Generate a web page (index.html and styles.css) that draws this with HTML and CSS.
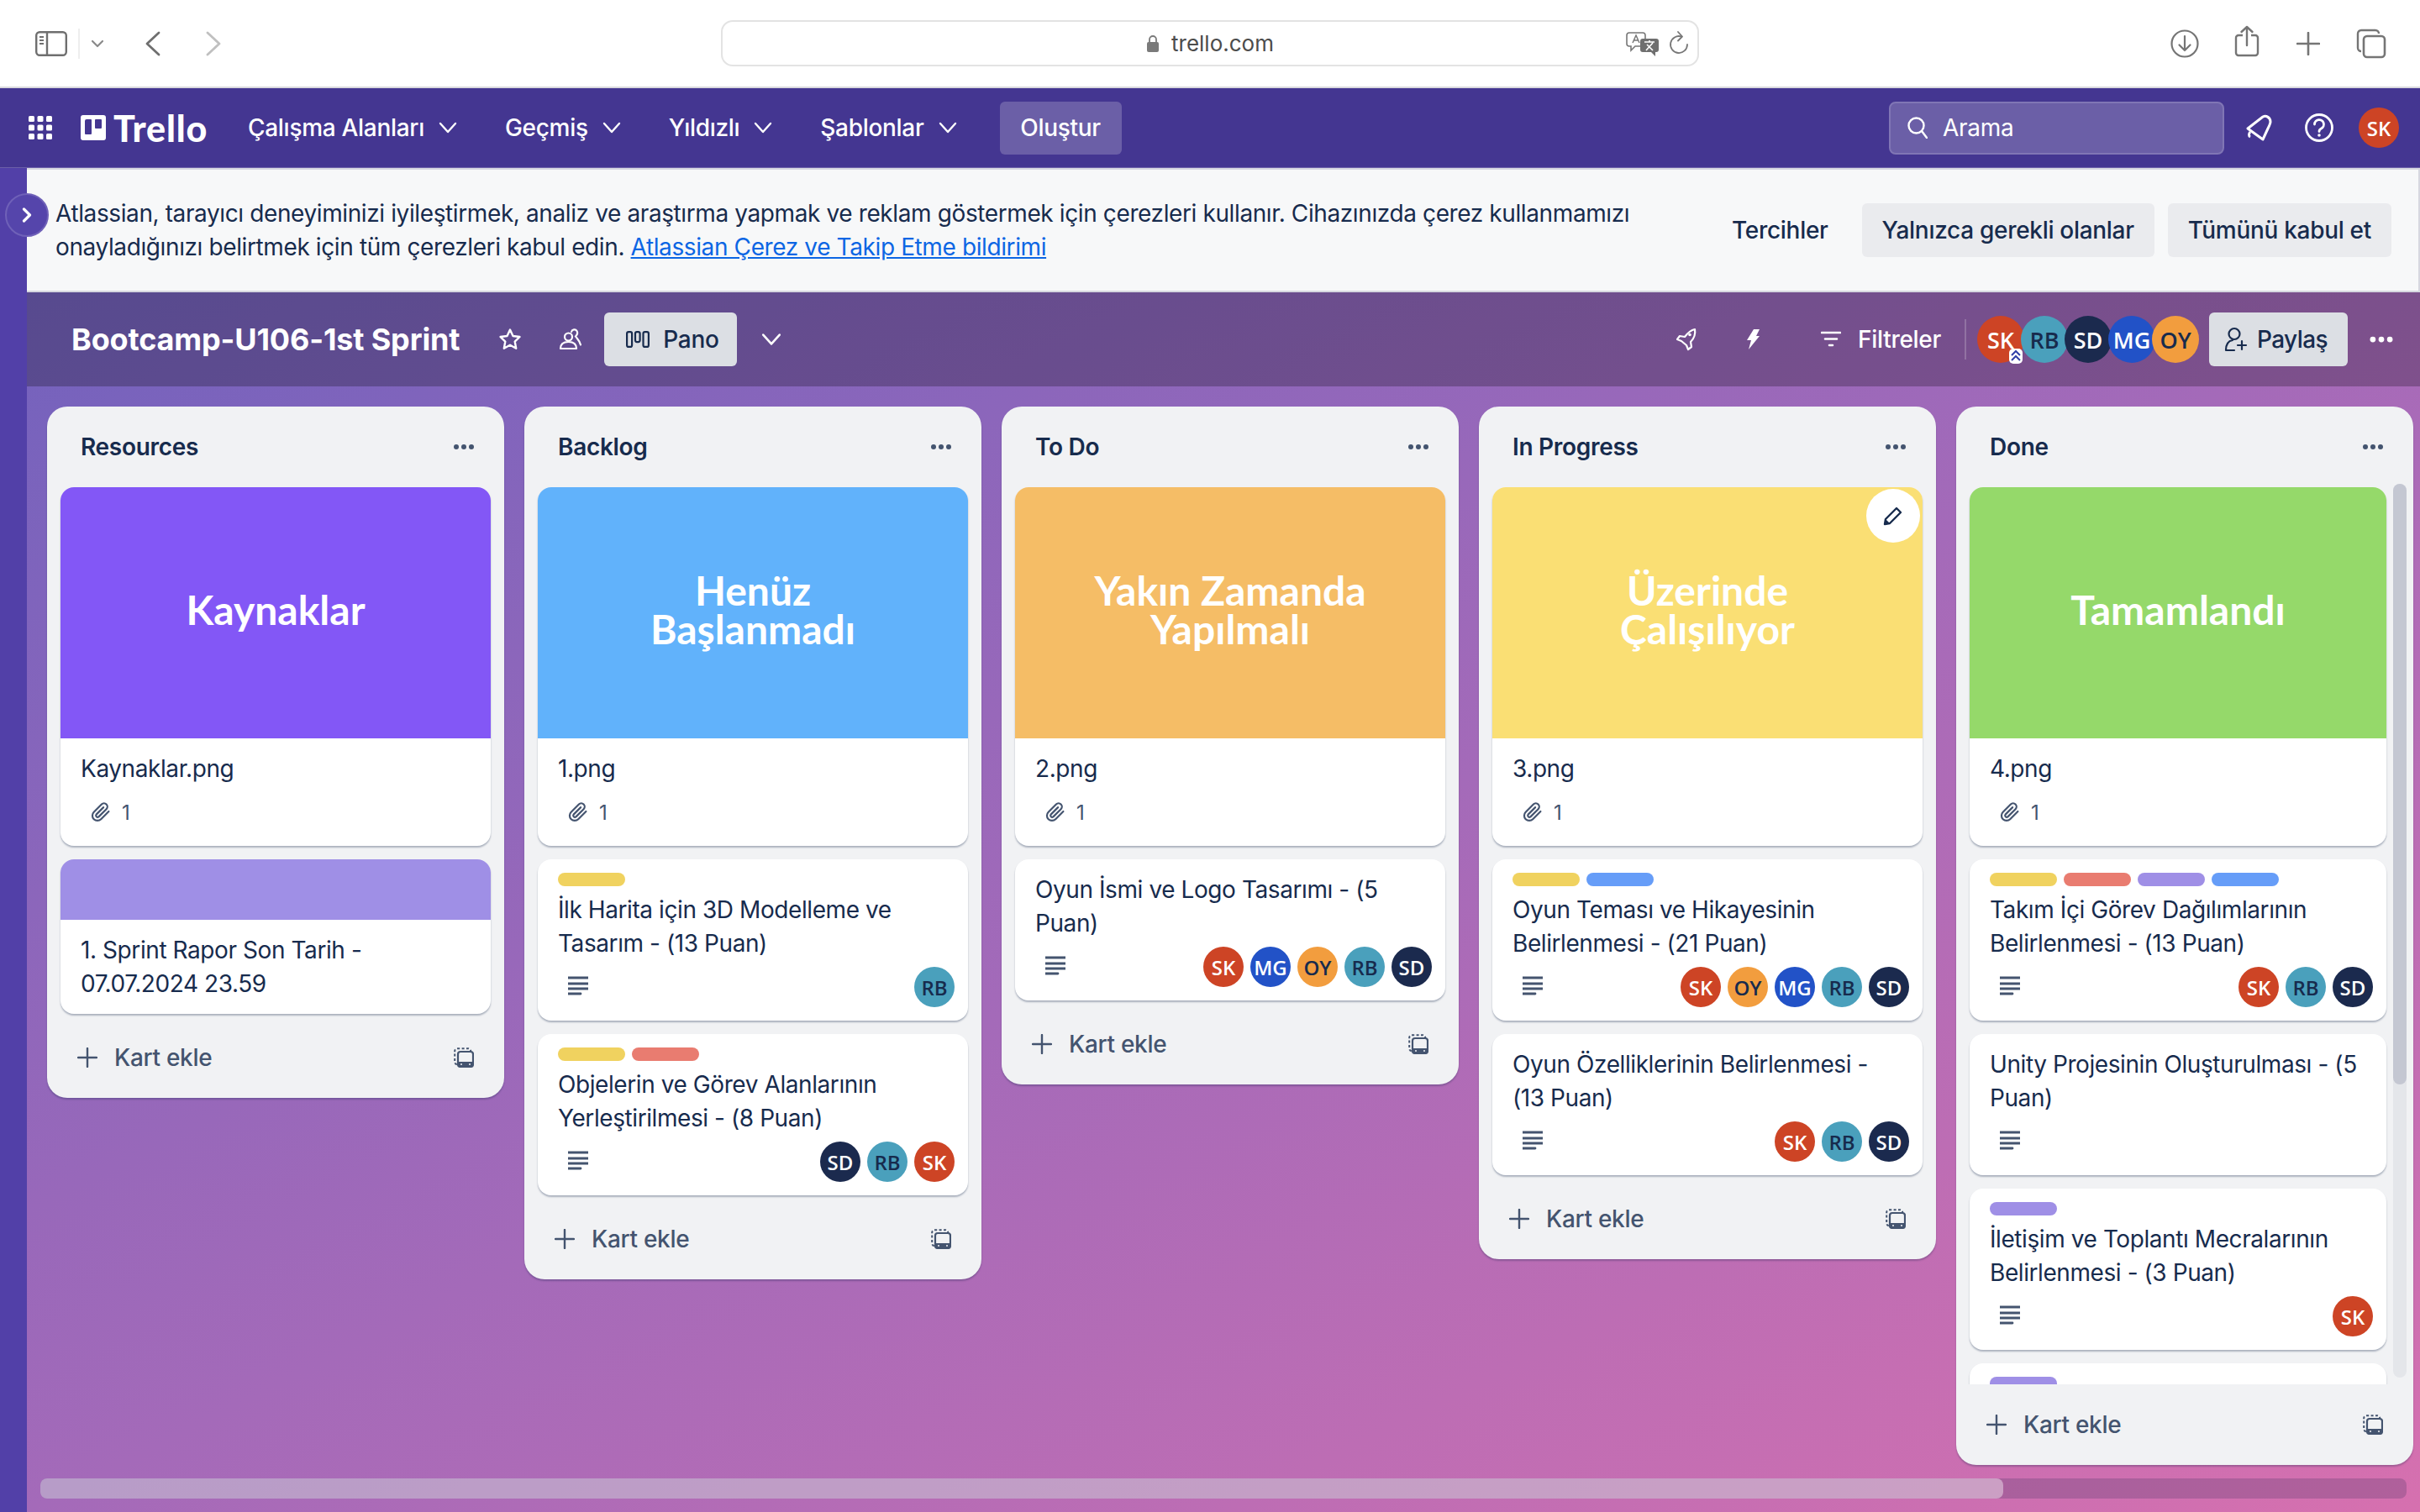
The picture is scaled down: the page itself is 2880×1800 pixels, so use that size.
FILE: index.html
```html
<!DOCTYPE html>
<html lang="tr">
<head>
<meta charset="utf-8">
<title>Bootcamp-U106-1st Sprint | Trello</title>
<link rel="stylesheet" href="styles.css">
</head>
<body>
<svg class="defs" width="0" height="0">
	<symbol id="i-chev" viewBox="0 0 24 24"><path d="M3 7l9 10 9-10" fill="none" stroke="currentColor" stroke-width="2.4" stroke-linecap="round" stroke-linejoin="round"/></symbol>
	<symbol id="i-dots" viewBox="0 0 32 32"><circle cx="7" cy="16" r="3" fill="currentColor"/><circle cx="16" cy="16" r="3" fill="currentColor"/><circle cx="25" cy="16" r="3" fill="currentColor"/></symbol>
	<symbol id="i-clip" viewBox="0 0 24 24"><path d="M21.4 11l-9.2 9.2a6 6 0 0 1-8.5-8.5l9.2-9.2a4 4 0 0 1 5.7 5.7l-9.2 9.2a2 2 0 0 1-2.8-2.8l8.5-8.5" fill="none" stroke="currentColor" stroke-width="2.2" stroke-linecap="round" stroke-linejoin="round"/></symbol>
	<symbol id="i-desc" viewBox="0 0 24 24"><path d="M0 3h24M0 10h24M0 16h24M0 22h15" stroke="currentColor" stroke-width="2.8" stroke-linecap="round" fill="none"/></symbol>
	<symbol id="i-plus" viewBox="0 0 24 24"><path d="M12 1v22M1 12h22" stroke="currentColor" stroke-width="2.4" stroke-linecap="round"/></symbol>
	<symbol id="i-tmpl" viewBox="0 0 24 24"><rect x="1.2" y="1.2" width="19" height="19" rx="3" fill="none" stroke="currentColor" stroke-width="2" stroke-dasharray="3 2.4"/><rect x="5" y="5" width="18" height="18" rx="3" fill="#f1f2f4" stroke="currentColor" stroke-width="2.2"/><path d="M5 17h18v3a3 3 0 0 1-3 3H8a3 3 0 0 1-3-3z" fill="currentColor"/><circle cx="9" cy="20" r="1" fill="#f1f2f4"/><circle cx="19" cy="20" r="1" fill="#f1f2f4"/></symbol>
</svg>

<header class="toolbar">
	<div class="tb-left">
		<svg class="tb-side" viewBox="0 0 38 30"><rect x="1.2" y="1.2" width="35.6" height="27.6" rx="4" fill="none" stroke="#6f6f6f" stroke-width="2.4"/><path d="M14 1v28" stroke="#6f6f6f" stroke-width="2.4"/><path d="M5 7h5M5 11h5M5 15h5" stroke="#6f6f6f" stroke-width="1.8"/></svg>
		<span class="tb-div"></span>
		<svg class="tb-mini" viewBox="0 0 14 10"><path d="M1 2l6 6 6-6" fill="none" stroke="#8a8a8a" stroke-width="2.2" stroke-linecap="round" stroke-linejoin="round"/></svg>
		<svg class="tb-back" viewBox="0 0 18 30"><path d="M16 2L2 15l14 13" fill="none" stroke="#6f6f6f" stroke-width="2.8" stroke-linecap="round" stroke-linejoin="round"/></svg>
		<svg class="tb-fwd" viewBox="0 0 18 30"><path d="M2 2l14 13L2 28" fill="none" stroke="#c0c0c0" stroke-width="2.8" stroke-linecap="round" stroke-linejoin="round"/></svg>
	</div>
	<div class="address">
		<span class="addr-url">
			<svg class="addr-lock" viewBox="0 0 16 22"><path d="M4 9V6a4 4 0 0 1 8 0v3" fill="none" stroke="#7a7a7a" stroke-width="1.8"/><rect x="1" y="9" width="14" height="12" rx="2" fill="#7a7a7a"/></svg>
			trello.com
		</span>
		<svg class="addr-trans" viewBox="0 0 40 30"><path d="M4 2h16a3 3 0 0 1 3 3v10a3 3 0 0 1-3 3H11l-5 5v-5H4a3 3 0 0 1-3-3V5a3 3 0 0 1 3-3z" fill="#fff" stroke="#777" stroke-width="1.6"/><path d="M8 14l4-9 4 9M9.5 11h5" fill="none" stroke="#777" stroke-width="1.5"/><path d="M20 9h16a3 3 0 0 1 3 3v10a3 3 0 0 1-3 3h-1v5l-5-5H20a3 3 0 0 1-3-3V12a3 3 0 0 1 3-3z" fill="#6f6f6f"/><path d="M22 13h12M28 11v2M24 23l8-9M25 16l7 7" fill="none" stroke="#fff" stroke-width="1.6"/></svg>
		<svg class="addr-reload" viewBox="0 0 24 28"><path d="M15 6.5A10 10 0 1 0 22 16" fill="none" stroke="#777" stroke-width="1.8" stroke-linecap="round"/><path d="M11 1l5 5.500-5 5" fill="none" stroke="#777" stroke-width="1.8" stroke-linecap="round" stroke-linejoin="round"/></svg>
	</div>
	<div class="tb-right">
		<svg class="tb-dl" viewBox="0 0 34 34"><circle cx="17" cy="17" r="15.500" fill="none" stroke="#757575" stroke-width="2.2"/><path d="M17 8v17M10.500 18.500L17 25l6.500-6.500" fill="none" stroke="#757575" stroke-width="2.2" stroke-linecap="round" stroke-linejoin="round"/></svg>
		<svg class="tb-share" viewBox="0 0 30 38"><path d="M10 12H5a3 3 0 0 0-3 3v18a3 3 0 0 0 3 3h20a3 3 0 0 0 3-3V15a3 3 0 0 0-3-3h-5" fill="none" stroke="#757575" stroke-width="2.4"/><path d="M15 24V2M8.500 8L15 2l6.500 6" fill="none" stroke="#757575" stroke-width="2.4" stroke-linecap="round" stroke-linejoin="round"/></svg>
		<svg class="tb-plus" viewBox="0 0 28 28"><path d="M14 1v26M1 14h26" stroke="#757575" stroke-width="2.6" stroke-linecap="round"/></svg>
		<svg class="tb-tabs" viewBox="0 0 36 36"><path d="M6 27a4 4 0 0 1-4-4V6a4 4 0 0 1 4-4h17a4 4 0 0 1 4 4" fill="none" stroke="#757575" stroke-width="2.4"/><rect x="9" y="9" width="25" height="25" rx="4" fill="none" stroke="#757575" stroke-width="2.6"/></svg>
	</div>
</header>

<nav class="nav">
	<svg class="nav-apps" viewBox="0 0 28 28"><g fill="#fff"><rect x="0" y="0" width="7" height="7" rx="1.500"/><rect x="10.500" y="0" width="7" height="7" rx="1.500"/><rect x="21" y="0" width="7" height="7" rx="1.500"/><rect x="0" y="10.500" width="7" height="7" rx="1.500"/><rect x="10.500" y="10.500" width="7" height="7" rx="1.500"/><rect x="21" y="10.500" width="7" height="7" rx="1.500"/><rect x="0" y="21" width="7" height="7" rx="1.500"/><rect x="10.500" y="21" width="7" height="7" rx="1.500"/><rect x="21" y="21" width="7" height="7" rx="1.500"/></g></svg>
	<div class="logo">
		<svg class="logo-mark" viewBox="0 0 30 30"><path fill-rule="evenodd" fill="#fff" d="M3 0h24a3 3 0 0 1 3 3v24a3 3 0 0 1-3 3H3a3 3 0 0 1-3-3V3a3 3 0 0 1 3-3zm4 5a2 2 0 0 0-2 2v15a1 1 0 0 0 1 1h6a1 1 0 0 0 1-1V6a1 1 0 0 0-1-1zm11 0a1 1 0 0 0-1 1v9a1 1 0 0 0 1 1h6a1 1 0 0 0 1-1V6a1 1 0 0 0-1-1z"/></svg>
		<span>Trello</span>
	</div>
	<a class="nav-item">Çalışma Alanları <svg class="chev"><use href="#i-chev"/></svg></a>
	<a class="nav-item">Geçmiş <svg class="chev"><use href="#i-chev"/></svg></a>
	<a class="nav-item">Yıldızlı <svg class="chev"><use href="#i-chev"/></svg></a>
	<a class="nav-item">Şablonlar <svg class="chev"><use href="#i-chev"/></svg></a>
	<a class="nav-create">Oluştur</a>
	<div class="search">
		<svg class="search-ic" viewBox="0 0 24 26"><circle cx="10.500" cy="10.500" r="9" fill="none" stroke="#fff" stroke-width="2.4"/><path d="M17 17l6 8" stroke="#fff" stroke-width="2.4" stroke-linecap="round"/></svg>
		Arama
	</div>
	<svg class="nav-bell" viewBox="0 0 34 32"><path d="M3 17L21 3c4-2 9 1 9 6 0 2-1 4-3 8l-6 13L3 17z" fill="none" stroke="#fff" stroke-width="3" stroke-linejoin="round"/><path d="M6 21c-2 2-2 5 0 6" fill="none" stroke="#fff" stroke-width="3"/></svg>
	<svg class="nav-help" viewBox="0 0 34 34"><circle cx="17" cy="17" r="15.500" fill="none" stroke="#fff" stroke-width="2.800"/><path d="M11.500 13a5.500 5.500 0 1 1 8 5c-1.500.8-2.500 1.700-2.500 3.500" fill="none" stroke="#fff" stroke-width="2.800" stroke-linecap="round"/><circle cx="17" cy="26" r="1.800" fill="#fff"/></svg>
	<span class="av av-sk nav-av">SK</span>
</nav>

<div class="page">
	<aside class="side">
		<span class="side-btn"><svg viewBox="0 0 12 20"><path d="M2.500 3l7 7-7 7" fill="none" stroke="#fff" stroke-width="3.200" stroke-linecap="round" stroke-linejoin="round"/></svg></span>
	</aside>
	<main class="main">
		<section class="cookie">
			<p class="cookie-text">Atlassian, tarayıcı deneyiminizi iyileştirmek, analiz ve araştırma yapmak ve reklam göstermek için çerezleri kullanır. Cihazınızda çerez kullanmamızı<br>onayladığınızı belirtmek için tüm çerezleri kabul edin. <a href="#">Atlassian Çerez ve Takip Etme bildirimi</a></p>
			<div class="cookie-btns">
				<a class="cbtn cbtn-plain">Tercihler</a>
				<a class="cbtn">Yalnızca gerekli olanlar</a>
				<a class="cbtn">Tümünü kabul et</a>
			</div>
		</section>

		<div class="board">
			<header class="bh">
				<h1 class="bh-title">Bootcamp-U106-1st Sprint</h1>
				<svg class="bh-star" viewBox="0 0 28 28"><path d="M14 2.500l3.500 7.500 8 1-5.800 5.600 1.500 8.100L14 20.800l-7.200 3.900 1.500-8.100L2.500 11l8-1z" fill="none" stroke="#fff" stroke-width="2.400" stroke-linejoin="round"/></svg>
				<svg class="bh-team" viewBox="0 0 28 28"><circle cx="11.500" cy="11" r="4.500" fill="none" stroke="#fff" stroke-width="2.200"/><path d="M2 25c0-5 3-8 9.500-8s9.500 3 9.500 8z" fill="none" stroke="#fff" stroke-width="2.200" stroke-linejoin="round"/><path d="M15 5c1-3 5-3.500 6.500-1s0 5-1.500 6.500c2 3 5 5 6 10" fill="none" stroke="#fff" stroke-width="2.200" stroke-linecap="round"/></svg>
				<a class="bh-btn bh-pano"><svg viewBox="0 0 28 20"><g fill="none" stroke="#172b4d" stroke-width="2.200"><rect x="1.100" y="1.100" width="6" height="17.800" rx="2"/><rect x="11" y="1.100" width="5.600" height="12" rx="2"/><rect x="20.500" y="1.100" width="6.400" height="17.800" rx="2"/></g></svg>Pano</a>
				<svg class="bh-chev"><use href="#i-chev"/></svg>
				<svg class="bh-rocket" viewBox="0 0 26 28"><path d="M23 2c1 6-1 11-5 15l1 6-4 3-2-5-6-5-5-2 3-4 6 1c3-4 7-8 12-9z" fill="none" stroke="#fff" stroke-width="2.200" stroke-linejoin="round"/><circle cx="17" cy="8.500" r="1.800" fill="#fff"/></svg>
				<svg class="bh-bolt" viewBox="0 0 16 24"><path d="M9 0h7l-4 8h4L3 24l3-11H1z" fill="#fff"/></svg>
				<a class="bh-filter"><svg viewBox="0 0 24 20"><path d="M1 2h22M5 9.500h14M10 17h4" stroke="#fff" stroke-width="2.600" stroke-linecap="round"/></svg>Filtreler</a>
				<span class="bh-sep"></span>
				<div class="bh-avs">
					<span class="av av-sk">SK<svg class="av-admin" viewBox="0 0 16 18"><rect width="16" height="18" rx="5" fill="#fff"/><path d="M3 8l5-5 5 5M3 14l5-5 5 5" fill="none" stroke="#2f3fa8" stroke-width="2"/></svg></span>
					<span class="av av-rb">RB</span>
					<span class="av av-sd">SD</span>
					<span class="av av-mg">MG</span>
					<span class="av av-oy">OY</span>
				</div>
				<a class="bh-btn bh-share"><svg viewBox="0 0 28 30"><circle cx="12" cy="8.500" r="6.500" fill="none" stroke="#172b4d" stroke-width="2.200"/><path d="M2 28c0-7 2-11 8-12M12 28H2M21 17v10M16 22h10" fill="none" stroke="#172b4d" stroke-width="2.200" stroke-linecap="round"/></svg>Paylaş</a>
				<svg class="bh-dots"><use href="#i-dots"/></svg>
			</header>

			<div class="lists">
				<section class="list">
					<div class="list-head"><h2>Resources</h2><svg class="dots"><use href="#i-dots"/></svg></div>
					<div class="cards">
						<article class="card">
							<div class="cover cover-purple"><span>Kaynaklar</span></div>
							<div class="card-body">
								<p class="title">Kaynaklar.png</p>
								<div class="meta"><svg class="clip"><use href="#i-clip"/></svg><span class="count">1</span></div>
							</div>
						</article>
						<article class="card">
							<div class="strip"></div>
							<div class="card-body"><p class="title">1. Sprint Rapor Son Tarih -<br>07.07.2024 23.59</p></div>
						</article>
					</div>
					<div class="list-foot"><svg class="plus"><use href="#i-plus"/></svg><span>Kart ekle</span><svg class="tmpl"><use href="#i-tmpl"/></svg></div>
				</section>

				<section class="list">
					<div class="list-head"><h2>Backlog</h2><svg class="dots"><use href="#i-dots"/></svg></div>
					<div class="cards">
						<article class="card">
							<div class="cover cover-blue"><span>Henüz<br>Başlanmadı</span></div>
							<div class="card-body">
								<p class="title">1.png</p>
								<div class="meta"><svg class="clip"><use href="#i-clip"/></svg><span class="count">1</span></div>
							</div>
						</article>
						<article class="card">
							<div class="card-body">
								<div class="labels"><i class="lb lb-y"></i></div>
								<p class="title">İlk Harita için 3D Modelleme ve<br>Tasarım - (13 Puan)</p>
								<div class="meta"><svg class="desc"><use href="#i-desc"/></svg><div class="avs"><span class="av av-rb">RB</span></div></div>
							</div>
						</article>
						<article class="card">
							<div class="card-body">
								<div class="labels"><i class="lb lb-y"></i><i class="lb lb-r"></i></div>
								<p class="title">Objelerin ve Görev Alanlarının<br>Yerleştirilmesi - (8 Puan)</p>
								<div class="meta"><svg class="desc"><use href="#i-desc"/></svg><div class="avs"><span class="av av-sd">SD</span><span class="av av-rb">RB</span><span class="av av-sk">SK</span></div></div>
							</div>
						</article>
					</div>
					<div class="list-foot"><svg class="plus"><use href="#i-plus"/></svg><span>Kart ekle</span><svg class="tmpl"><use href="#i-tmpl"/></svg></div>
				</section>

				<section class="list">
					<div class="list-head"><h2>To Do</h2><svg class="dots"><use href="#i-dots"/></svg></div>
					<div class="cards">
						<article class="card">
							<div class="cover cover-orange"><span>Yakın Zamanda<br>Yapılmalı</span></div>
							<div class="card-body">
								<p class="title">2.png</p>
								<div class="meta"><svg class="clip"><use href="#i-clip"/></svg><span class="count">1</span></div>
							</div>
						</article>
						<article class="card">
							<div class="card-body">
								<p class="title">Oyun İsmi ve Logo Tasarımı - (5<br>Puan)</p>
								<div class="meta"><svg class="desc"><use href="#i-desc"/></svg><div class="avs"><span class="av av-sk">SK</span><span class="av av-mg">MG</span><span class="av av-oy">OY</span><span class="av av-rb">RB</span><span class="av av-sd">SD</span></div></div>
							</div>
						</article>
					</div>
					<div class="list-foot"><svg class="plus"><use href="#i-plus"/></svg><span>Kart ekle</span><svg class="tmpl"><use href="#i-tmpl"/></svg></div>
				</section>

				<section class="list">
					<div class="list-head"><h2>In Progress</h2><svg class="dots"><use href="#i-dots"/></svg></div>
					<div class="cards">
						<article class="card">
							<div class="cover cover-yellow"><span>Üzerinde<br>Çalışılıyor</span>
								<span class="edit"><svg viewBox="0 0 24 24"><path d="M16 3l5 5L8 21l-6 1 1-6z" fill="none" stroke="#172b4d" stroke-width="2.400" stroke-linejoin="round"/><path d="M3 16l5 5-6 1z" fill="#172b4d"/></svg></span>
							</div>
							<div class="card-body">
								<p class="title">3.png</p>
								<div class="meta"><svg class="clip"><use href="#i-clip"/></svg><span class="count">1</span></div>
							</div>
						</article>
						<article class="card">
							<div class="card-body">
								<div class="labels"><i class="lb lb-y"></i><i class="lb lb-b"></i></div>
								<p class="title">Oyun Teması ve Hikayesinin<br>Belirlenmesi - (21 Puan)</p>
								<div class="meta"><svg class="desc"><use href="#i-desc"/></svg><div class="avs"><span class="av av-sk">SK</span><span class="av av-oy">OY</span><span class="av av-mg">MG</span><span class="av av-rb">RB</span><span class="av av-sd">SD</span></div></div>
							</div>
						</article>
						<article class="card">
							<div class="card-body">
								<p class="title">Oyun Özelliklerinin Belirlenmesi -<br>(13 Puan)</p>
								<div class="meta"><svg class="desc"><use href="#i-desc"/></svg><div class="avs"><span class="av av-sk">SK</span><span class="av av-rb">RB</span><span class="av av-sd">SD</span></div></div>
							</div>
						</article>
					</div>
					<div class="list-foot"><svg class="plus"><use href="#i-plus"/></svg><span>Kart ekle</span><svg class="tmpl"><use href="#i-tmpl"/></svg></div>
				</section>

				<section class="list list-done">
					<div class="list-head"><h2>Done</h2><svg class="dots"><use href="#i-dots"/></svg></div>
					<div class="scroller">
						<div class="cards">
							<article class="card">
								<div class="cover cover-green"><span>Tamamlandı</span></div>
								<div class="card-body">
									<p class="title">4.png</p>
									<div class="meta"><svg class="clip"><use href="#i-clip"/></svg><span class="count">1</span></div>
								</div>
							</article>
							<article class="card">
								<div class="card-body">
									<div class="labels"><i class="lb lb-y"></i><i class="lb lb-r"></i><i class="lb lb-p"></i><i class="lb lb-b"></i></div>
									<p class="title">Takım İçi Görev Dağılımlarının<br>Belirlenmesi - (13 Puan)</p>
									<div class="meta"><svg class="desc"><use href="#i-desc"/></svg><div class="avs"><span class="av av-sk">SK</span><span class="av av-rb">RB</span><span class="av av-sd">SD</span></div></div>
								</div>
							</article>
							<article class="card">
								<div class="card-body">
									<p class="title">Unity Projesinin Oluşturulması - (5<br>Puan)</p>
									<div class="meta"><svg class="desc"><use href="#i-desc"/></svg></div>
								</div>
							</article>
							<article class="card">
								<div class="card-body">
									<div class="labels"><i class="lb lb-p"></i></div>
									<p class="title">İletişim ve Toplantı Mecralarının<br>Belirlenmesi - (3 Puan)</p>
									<div class="meta"><svg class="desc"><use href="#i-desc"/></svg><div class="avs"><span class="av av-sk">SK</span></div></div>
								</div>
							</article>
							<article class="card">
								<div class="card-body">
									<div class="labels"><i class="lb lb-p"></i></div>
								</div>
							</article>
						</div>
						<div class="vbar"><div class="vbar-thumb"></div></div>
					</div>
					<div class="list-foot"><svg class="plus"><use href="#i-plus"/></svg><span>Kart ekle</span><svg class="tmpl"><use href="#i-tmpl"/></svg></div>
				</section>
			</div>

			<div class="hbar"><div class="hbar-thumb"></div></div>
		</div>
	</main>
</div>
</body>
</html>
```

FILE: styles.css
```css
* {
	box-sizing: border-box;
}

html, body {
	margin: 0;
	height: 100%;
}

body {
	display: flex;
	flex-direction: column;
	height: 1800px;
	overflow: hidden;
	font-family: Inter, "Liberation Sans", sans-serif;
	font-size: 28px;
	color: #172b4d;
	letter-spacing: -0.3px;
}

a {
	color: inherit;
	text-decoration: none;
}

p, h1, h2 {
	margin: 0;
}

svg {
	flex: none;
	display: block;
}

.defs {
	position: absolute;
}

/* safari bar */
.toolbar {
	flex: none;
	height: 105px;
	display: grid;
	grid-template-columns: 858px 1164px 1fr;
	align-items: center;
	background: #fff;
	border-bottom: 2px solid #d9d9de;
}

.tb-left, .tb-right {
	display: flex;
	align-items: center;
}

.tb-left {
	padding-left: 42px;
}

.tb-side {
	width: 38px;
	height: 30px;
}

.tb-div {
	width: 2px;
	height: 36px;
	margin-left: 13px;
	background: #eee;
}

.tb-mini {
	width: 14px;
	height: 10px;
	margin-left: 14px;
}

.tb-back {
	width: 18px;
	height: 30px;
	margin-left: 50px;
}

.tb-fwd {
	width: 18px;
	height: 30px;
	margin-left: 54px;
}

.address {
	position: relative;
	height: 55px;
	display: flex;
	align-items: center;
	justify-content: center;
	border: 2px solid #e3e3e3;
	border-radius: 14px;
}

.addr-url {
	display: flex;
	align-items: center;
	gap: 14px;
	font-size: 26px;
	color: #4c4c4c;
	letter-spacing: 0;
}

.addr-lock {
	width: 16px;
	height: 22px;
}

.addr-trans {
	position: absolute;
	right: 45px;
	top: 11px;
	width: 40px;
	height: 30px;
}

.addr-reload {
	position: absolute;
	right: 10px;
	top: 11px;
	width: 24px;
	height: 28px;
}

.tb-right {
	padding-left: 561px;
}

.tb-dl {
	width: 34px;
	height: 34px;
}

.tb-share {
	width: 30px;
	height: 38px;
	margin: -6px 0 0 42px;
}

.tb-plus {
	width: 28px;
	height: 28px;
	margin-left: 44px;
}

.tb-tabs {
	width: 36px;
	height: 36px;
	margin-left: 43px;
}

/* top nav */
.nav {
	flex: none;
	height: 95px;
	display: flex;
	align-items: center;
	padding-left: 34px;
	background: #443691;
	border-bottom: 1px solid #6b5fa8;
	color: #fff;
	font-weight: 500;
}

.nav-apps {
	width: 28px;
	height: 28px;
}

.logo {
	display: flex;
	align-items: center;
	gap: 9px;
	margin-left: 34px;
	margin-right: 48px;
	font-family: Lato, sans-serif;
	font-size: 43px;
	font-weight: 900;
	letter-spacing: 0.8px;
}

.logo-mark {
	width: 30px;
	height: 30px;
}

.nav-item {
	display: flex;
	align-items: center;
	gap: 16px;
	margin-right: 56px;
}

.chev {
	width: 24px;
	height: 24px;
}

.nav-create {
	margin-left: -6px;
	width: 145px;
	height: 63px;
	display: flex;
	align-items: center;
	justify-content: center;
	background: #6b5fa7;
	border-radius: 6px;
}

.search {
	width: 399px;
	height: 63px;
	margin-left: auto;
	display: flex;
	align-items: center;
	gap: 18px;
	padding-left: 20px;
	background: #6b5fa7;
	border: 2px solid #8076b5;
	border-radius: 8px;
	font-weight: 400;
}

.search-ic {
	width: 24px;
	height: 26px;
}

.nav-bell {
	width: 34px;
	height: 32px;
	margin-left: 25px;
}

.nav-help {
	width: 34px;
	height: 34px;
	margin-left: 37px;
}

.nav-av {
	margin: 0 25px 0 30px;
}

/* page under the nav */
.page {
	flex: 1;
	display: flex;
	min-height: 0;
	position: relative;
}

.side {
	flex: none;
	width: 32px;
	background: #5240a8;
}

.side-btn {
	position: absolute;
	left: 6px;
	top: 30px;
	width: 52px;
	height: 52px;
	display: flex;
	align-items: center;
	justify-content: center;
	background: #5545ab;
	border: 2px solid #6f61b8;
	border-radius: 50%;
	z-index: 2;
}

.side-btn svg {
	width: 12px;
	height: 20px;
}

.main {
	flex: 1;
	min-width: 0;
	display: flex;
	flex-direction: column;
}

.cookie {
	flex: none;
	height: 148px;
	display: flex;
	align-items: center;
	justify-content: space-between;
	padding: 0 32px 0 34px;
	background: #f7f8f9;
	border: 2px solid #d6d7e0;
	border-width: 2px 2px 2px 0;
	line-height: 40px;
	white-space: nowrap;
}

.cookie-text {
	letter-spacing: -0.39px;
}

.cookie-text a {
	color: #0c66e4;
	text-decoration: underline;
}

.cookie-btns {
	display: flex;
	gap: 16px;
	font-weight: 500;
}

.cbtn {
	height: 64px;
	padding: 0 24px;
	display: flex;
	align-items: center;
	background: #eaebee;
	border-radius: 6px;
}

.cbtn-plain {
	background: none;
}

/* board */
.board {
	flex: 1;
	min-height: 0;
	display: flex;
	flex-direction: column;
	background: linear-gradient(to bottom right, #7362bd 0%, #a46ab9 50%, #d670af 100%);
}

.bh {
	flex: none;
	height: 112px;
	display: flex;
	align-items: center;
	padding-left: 53px;
	background: rgba(0, 0, 0, 0.24);
	color: #fff;
}

.bh-title {
	font-size: 36px;
	font-weight: 700;
	letter-spacing: -0.15px;
}

.bh-star {
	width: 28px;
	height: 28px;
	margin-left: 46px;
}

.bh-team {
	width: 28px;
	height: 28px;
	margin-left: 44px;
}

.bh-btn {
	height: 64px;
	display: flex;
	align-items: center;
	background: #dcdfe4;
	border-radius: 6px;
	color: #172b4d;
	font-weight: 500;
}

.bh-pano {
	width: 158px;
	margin-left: 26px;
	padding-left: 26px;
	gap: 16px;
}

.bh-pano svg {
	width: 28px;
	height: 20px;
}

.bh-chev {
	width: 26px;
	height: 26px;
	margin-left: 28px;
}

.bh-rocket {
	width: 26px;
	height: 28px;
	margin-left: auto;
}

.bh-bolt {
	width: 16px;
	height: 24px;
	margin-left: 58px;
}

.bh-filter {
	display: flex;
	align-items: center;
	gap: 20px;
	margin-left: 73px;
	font-weight: 500;
}

.bh-filter svg {
	width: 24px;
	height: 20px;
}

.bh-sep {
	width: 2px;
	height: 48px;
	margin: 0 13px 0 28px;
	background: rgba(255, 255, 255, 0.2);
}

.bh-avs {
	display: flex;
}

.bh-avs .av {
	width: 56px;
	height: 56px;
	margin-right: -4px;
	font-size: 27px;
}

.bh-share {
	width: 165px;
	margin-left: 16px;
	padding-left: 18px;
	gap: 11px;
	letter-spacing: -0.6px;
}

.bh-share svg {
	width: 28px;
	height: 30px;
}

.bh-dots {
	width: 36px;
	height: 36px;
	margin: 0 28px 0 22px;
}

/* avatars */
.av {
	position: relative;
	flex: none;
	width: 48px;
	height: 48px;
	display: flex;
	align-items: center;
	justify-content: center;
	border-radius: 50%;
	font-family: "Open Sans", sans-serif;
	font-size: 24px;
	font-weight: 600;
	letter-spacing: 0;
}

.av-sk {
	background: #cd4425;
	color: #fff;
}

.av-oy {
	background: #f29d3e;
	color: #172b4d;
}

.av-mg {
	background: #2252c7;
	color: #fff;
}

.av-rb {
	background: #4aa0bc;
	color: #172b4d;
}

.av-sd {
	background: #1b2a4e;
	color: #fff;
}

.av-admin {
	position: absolute;
	right: 2px;
	bottom: -1px;
	width: 16px;
	height: 18px;
}

/* lists */
.lists {
	flex: 1;
	min-height: 0;
	display: flex;
	align-items: flex-start;
	gap: 24px;
	padding: 24px 0 0 24px;
}

.list {
	flex: none;
	width: 544px;
	background: #f1f2f4;
	border-radius: 24px;
	box-shadow: 0 2px 2px rgba(9, 30, 66, 0.25);
}

.list-head {
	height: 96px;
	display: flex;
	align-items: center;
	justify-content: space-between;
	padding: 0 32px 0 40px;
}

.list-head h2 {
	font-size: 28px;
	font-weight: 600;
}

.dots {
	width: 32px;
	height: 32px;
	color: #44546f;
}

.cards {
	display: flex;
	flex-direction: column;
	gap: 16px;
	padding: 0 16px;
}

.card {
	flex: none;
	background: #fff;
	border-radius: 16px;
	box-shadow: 0 2px 2px rgba(9, 30, 66, 0.3);
	overflow: hidden;
}

.cover {
	position: relative;
	height: 299px;
	display: flex;
	align-items: center;
	justify-content: center;
	padding-bottom: 8px;
	text-align: center;
	font-family: Lato, sans-serif;
	font-size: 48px;
	font-weight: 700;
	line-height: 46px;
	letter-spacing: 0;
	color: #fff;
}

.cover-purple {
	background: #8357f6;
}

.cover-blue {
	background: #61b2fb;
}

.cover-orange {
	background: #f5bd66;
}

.cover-yellow {
	background: #fadf74;
}

.cover-green {
	background: #95d96a;
}

.strip {
	height: 72px;
	background: #9f8fe6;
}

.edit {
	position: absolute;
	top: 2px;
	right: 3px;
	width: 64px;
	height: 64px;
	display: flex;
	align-items: center;
	justify-content: center;
	background: #fff;
	border-radius: 50%;
}

.edit svg {
	width: 24px;
	height: 24px;
}

.card-body {
	padding: 16px 16px 16px 24px;
}

.labels {
	display: flex;
	gap: 8px;
	margin-bottom: 8px;
}

.lb {
	width: 80px;
	height: 16px;
	border-radius: 8px;
}

.lb-y {
	background: #f0d25f;
}

.lb-r {
	background: #e97c70;
}

.lb-p {
	background: #9f8fe6;
}

.lb-b {
	background: #669df8;
}

.title {
	line-height: 40px;
	white-space: nowrap;
	letter-spacing: -0.42px;
}

.meta {
	height: 48px;
	margin-top: 8px;
	display: flex;
	align-items: center;
	justify-content: space-between;
	padding-left: 12px;
	color: #44546f;
}

.clip {
	width: 24px;
	height: 24px;
}

.meta .clip + .count {
	margin-left: 13px;
	margin-right: auto;
	font-size: 24px;
}

.desc {
	width: 24px;
	height: 24px;
	margin-bottom: 4px;
}

.avs {
	display: flex;
	gap: 8px;
}

.list-foot {
	height: 100px;
	display: flex;
	align-items: center;
	padding: 4px 36px 0 36px;
	color: #44546f;
	font-weight: 500;
}

.plus {
	width: 24px;
	height: 24px;
}

.list-foot span {
	margin-left: 20px;
	margin-right: auto;
}

.tmpl {
	width: 24px;
	height: 24px;
}

/* Done is the one list that overflows */
.list-done .scroller {
	display: flex;
	height: 1068px;
}

.list-done .cards {
	flex: 1;
	min-width: 0;
	height: 100%;
	overflow: hidden;
	padding: 0 8px 0 16px;
}

.list-done .list-foot {
	height: 96px;
	padding-top: 0;
}

.vbar {
	flex: none;
	width: 16px;
	height: 1064px;
	margin: -4px 8px 0 0;
	background: #e4e6ea;
	border-radius: 8px;
}

.vbar-thumb {
	height: 715px;
	background: #c4c7d2;
	border-radius: 8px;
}

.hbar {
	flex: none;
	height: 24px;
	margin: 0 16px 16px;
	background: rgba(9, 30, 66, 0.18);
	border-radius: 8px;
}

.hbar-thumb {
	width: 2336px;
	height: 100%;
	background: rgba(255, 255, 255, 0.4);
	border-radius: 8px;
}
```
